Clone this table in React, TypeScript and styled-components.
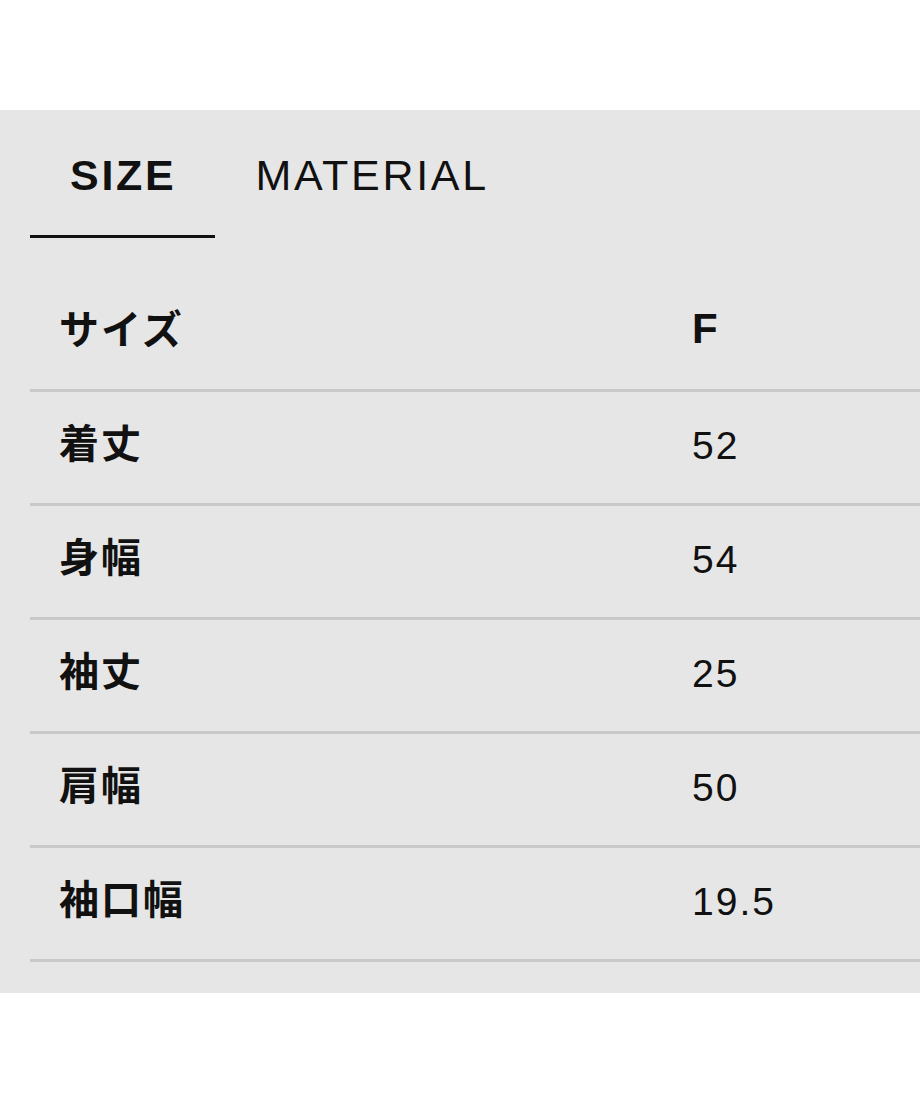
import React from "react";
import styled, { createGlobalStyle } from "styled-components";

const Global = createGlobalStyle`
  html, body { margin: 0; padding: 0; background: #ffffff; }
  body { font-family: "Liberation Sans", "Noto Sans CJK JP", sans-serif; color: #111; }
`;

const Page = styled.div`
  padding-top: 110px;
  width: 920px;
  height: 1104px;
  box-sizing: border-box;
  background: #ffffff;
`;

const Panel = styled.section`
  background: #e6e6e6;
  padding: 0 0 31px 30px;
`;

const Tabs = styled.div`
  display: flex;
`;

const Tab = styled.div<{ $active?: boolean }>`
  padding: 43px 39px 38px 40px;
  line-height: 44px;
  font-size: 43px;
  letter-spacing: 2.7px;
  font-family: "Liberation Sans", Arial, sans-serif;
  font-weight: ${(p) => (p.$active ? 700 : 400)};
  color: #111;
  border-bottom: 3px solid ${(p) => (p.$active ? "#111" : "transparent")};
`;

const Table = styled.div`
  margin-top: 40px;
`;

const Row = styled.div`
  display: grid;
  grid-template-columns: 632px 1fr;
  align-items: center;
  padding: 0 0 4px 30px;
  height: 107px;
  border-bottom: 3px solid #c9c9c9;
`;

const Label = styled.div`
  font-family: "Noto Sans CJK JP", "Liberation Sans", sans-serif;
  font-weight: 700;
  font-size: 40px;
  letter-spacing: 2px;
  line-height: 48px;
  padding-bottom: 9px;
  margin-left: -1px;
  color: #111;
`;

const Value = styled.div<{ $bold?: boolean }>`
  font-family: "Liberation Sans", Arial, sans-serif;
  font-weight: ${(p) => (p.$bold ? 700 : 400)};
  font-size: ${(p) => (p.$bold ? "42px" : "39px")};
  letter-spacing: ${(p) => (p.$bold ? "0" : "2px")};
  line-height: 48px;
  padding-bottom: ${(p) => (p.$bold ? "5px" : "0")};
  color: #111;
`;

const rows: [string, string][] = [
  ["着丈", "52"],
  ["身幅", "54"],
  ["袖丈", "25"],
  ["肩幅", "50"],
  ["袖口幅", "19.5"],
];

export default function App() {
  return (
    <Page>
      <Global />
      <Panel>
        <Tabs>
          <Tab $active>SIZE</Tab>
          <Tab>MATERIAL</Tab>
        </Tabs>
        <Table>
          <Row>
            <Label>サイズ</Label>
            <Value $bold>F</Value>
          </Row>
          {rows.map(([l, v]) => (
            <Row key={l}>
              <Label>{l}</Label>
              <Value>{v}</Value>
            </Row>
          ))}
        </Table>
      </Panel>
    </Page>
  );
}
